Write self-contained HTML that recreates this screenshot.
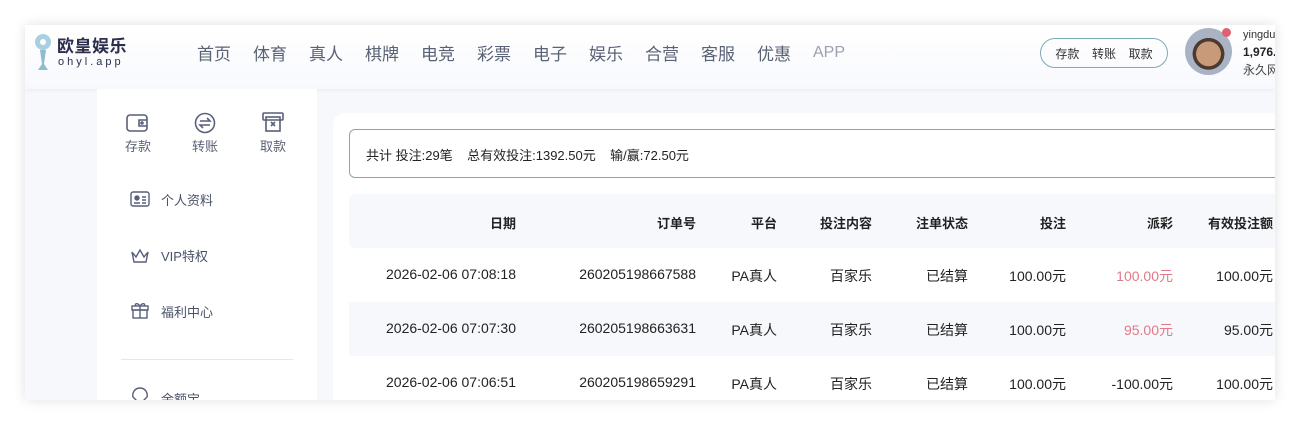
<!DOCTYPE html>
<html><head><meta charset="utf-8"><style>
*{margin:0;padding:0;box-sizing:border-box}
body{width:1300px;height:425px;background:#fff;font-family:"Liberation Sans","Noto Sans CJK SC",sans-serif;position:relative;overflow:hidden}
#page{position:absolute;left:25px;top:25px;width:1250px;height:375px;background:#f7f8fc;overflow:hidden;box-shadow:0 0 12px rgba(0,0,0,.12)}
#hdr{position:absolute;left:0;top:0;width:1250px;height:64px;background:linear-gradient(#fff,#f8f9fd);box-shadow:0 2px 4px rgba(0,0,0,.04)}
.logo-t{position:absolute;left:32px;top:7px;font-size:17px;font-weight:bold;color:#2b2f4d;letter-spacing:0.5px}
.logo-s{position:absolute;left:33px;top:31px;font-size:11px;color:#2b2f4d;letter-spacing:3px}
.nav{position:absolute;top:15px;font-size:17px;color:#5a6275;white-space:nowrap}
.btns{position:absolute;left:1015px;top:13px;width:128px;height:30px;border:1px solid #7eaab5;border-radius:15px;font-size:12px;color:#333;display:flex;justify-content:space-around;align-items:center;padding:0 8px}
.av{position:absolute;left:1160px;top:3px;width:47px;height:47px;border-radius:50%;background:radial-gradient(circle at 50% 55%,#c99a7a 0 35%,#4a3a30 36% 45%,#aab3c4 46%)}
.dot{position:absolute;left:1197px;top:3px;width:9px;height:9px;border-radius:50%;background:#e06070}
.ui{position:absolute;left:1218px;white-space:nowrap}
#side{position:absolute;left:72px;top:64px;width:220px;height:320px;background:#fff}
.qi{position:absolute;top:47px;font-size:13px;color:#5a6275;text-align:center;width:40px}
.mi{position:absolute;left:64px;font-size:13px;color:#4a5266}
#main{position:absolute;left:308px;top:88px;width:960px;height:300px;background:#fff;border-radius:12px 0 0 0}
.sum{position:absolute;left:16px;top:16px;width:950px;height:49px;border:1px solid #7eaab5;border-radius:6px;font-size:13px;color:#222;padding:15px 0 0 16px}
.th{position:absolute;left:16px;top:81px;width:950px;height:54px;background:#f7f8fc;border-radius:6px}
.row{position:absolute;left:16px;width:950px;height:54px}
.c{position:absolute;font-size:14px;color:#222;text-align:right;white-space:nowrap}
.h{font-size:13px;font-weight:bold}
</style></head><body><div id="page">
<div id="hdr">
<svg style="position:absolute;left:7px;top:7px" width="22" height="42" viewBox="0 0 22 42"><circle cx="11" cy="10" r="8" fill="#a9cfe0"/><circle cx="11" cy="10" r="3" fill="#fff"/><path d="M8 18 L14 18 L12 32 L16 38 L6 38 L10 32Z" fill="#8fbccf"/></svg>
<div class="logo-t">欧皇娱乐</div><div class="logo-s">ohyl.app</div>
<div class="nav" style="left:172px">首页</div><div class="nav" style="left:228px">体育</div><div class="nav" style="left:284px">真人</div><div class="nav" style="left:340px">棋牌</div><div class="nav" style="left:396px">电竞</div><div class="nav" style="left:452px">彩票</div><div class="nav" style="left:508px">电子</div><div class="nav" style="left:564px">娱乐</div><div class="nav" style="left:620px">合营</div><div class="nav" style="left:676px">客服</div><div class="nav" style="left:732px">优惠</div><div class="nav" style="left:788px;color:#9aa0ad;top:19px;font-size:16px">APP</div>
<div class="btns"><span>存款</span><span>转账</span><span>取款</span></div>
<div class="av"></div><div class="dot"></div>
<div class="ui" style="top:4px;font-size:11px;color:#333">yingdu</div>
<div class="ui" style="top:20px;font-size:12px;font-weight:bold;color:#222">1,976.</div>
<div class="ui" style="top:36px;font-size:12px;color:#444">永久网</div>
</div>
<div id="side">
<svg style="position:absolute;left:29px;top:25px" width="22" height="18" viewBox="0 0 22 18" fill="none" stroke="#5a5f7a" stroke-width="1.6"><rect x="1" y="1" width="20" height="16" rx="3"/><path d="M21 6h-8v6h8"/><circle cx="16" cy="9" r="1"/></svg>
<svg style="position:absolute;left:97px;top:23px" width="22" height="22" viewBox="0 0 22 22" fill="none" stroke="#5a5f7a" stroke-width="1.6"><circle cx="11" cy="11" r="9.5"/><path d="M6 9h10l-3-3M16 13H6l3 3"/></svg>
<svg style="position:absolute;left:165px;top:23px" width="22" height="20" viewBox="0 0 22 20" fill="none" stroke="#5a5f7a" stroke-width="1.6"><rect x="1" y="1" width="20" height="7" rx="1"/><rect x="4" y="5" width="14" height="14"/><path d="M9 10l4 4M13 10l-4 4"/></svg>
<div class="qi" style="left:21px">存款</div><div class="qi" style="left:88px">转账</div><div class="qi" style="left:156px">取款</div>
<svg style="position:absolute;left:33px;top:102px" width="20" height="16" viewBox="0 0 20 16" fill="none" stroke="#5a5f7a" stroke-width="1.4"><rect x="1" y="1" width="18" height="14" rx="2"/><circle cx="7" cy="7" r="2" fill="#5a5f7a"/><path d="M4 12h6M12 6h4M12 9h4M12 12h4"/></svg>
<div class="mi" style="top:101px">个人资料</div>
<svg style="position:absolute;left:32px;top:158px" width="22" height="16" viewBox="0 0 22 16" fill="none" stroke="#5a5f7a" stroke-width="1.4"><path d="M3 5l4 5 4-7 4 7 4-5-2 10H5z"/></svg>
<div class="mi" style="top:157px">VIP特权</div>
<svg style="position:absolute;left:34px;top:212px" width="18" height="18" viewBox="0 0 18 18" fill="none" stroke="#5a5f7a" stroke-width="1.4"><rect x="1" y="5" width="16" height="4"/><rect x="2" y="9" width="14" height="8"/><path d="M9 5v12M9 5C6 1 3 3 5 5M9 5c3-4 6-2 4 0"/></svg>
<div class="mi" style="top:213px">福利中心</div>
<div style="position:absolute;left:24px;top:270px;width:172px;height:1px;background:#e3e8ef"></div>
<svg style="position:absolute;left:34px;top:298px" width="18" height="18" viewBox="0 0 18 18" fill="none" stroke="#5a5f7a" stroke-width="1.4"><path d="M9 1c-6 0-8 6-7 9l7 7 7-7c1-3-1-9-7-9z"/></svg>
<div class="mi" style="top:300px">余额宝</div>
</div>
<div id="main">
<div class="sum">共计 投注:29笔&nbsp;&nbsp;&nbsp;&nbsp;总有效投注:1392.50元&nbsp;&nbsp;&nbsp;&nbsp;输/赢:72.50元</div>
<div class="th"></div>
<div class="row" style="top:189px;background:#f7f8fc"></div>
</div>
<div style="position:absolute;left:0;top:0">
<div class="c h" style="right:-491px;top:188px">日期</div>
<div class="c h" style="right:-671px;top:188px">订单号</div>
<div class="c h" style="right:-752px;top:188px">平台</div>
<div class="c h" style="right:-847px;top:188px">投注内容</div>
<div class="c h" style="right:-943px;top:188px">注单状态</div>
<div class="c h" style="right:-1041px;top:188px">投注</div>
<div class="c h" style="right:-1148px;top:188px">派彩</div>
<div class="c h" style="right:-1248px;top:188px">有效投注额</div>

<div class="c" style="right:-491px;top:241px">2026-02-06 07:08:18</div>
<div class="c" style="right:-671px;top:241px">260205198667588</div>
<div class="c" style="right:-752px;top:241px">PA真人</div>
<div class="c" style="right:-847px;top:241px">百家乐</div>
<div class="c" style="right:-943px;top:241px">已结算</div>
<div class="c" style="right:-1041px;top:241px">100.00元</div>
<div class="c" style="right:-1148px;top:241px;color:#e07a88">100.00元</div>
<div class="c" style="right:-1248px;top:241px">100.00元</div>

<div class="c" style="right:-491px;top:295px">2026-02-06 07:07:30</div>
<div class="c" style="right:-671px;top:295px">260205198663631</div>
<div class="c" style="right:-752px;top:295px">PA真人</div>
<div class="c" style="right:-847px;top:295px">百家乐</div>
<div class="c" style="right:-943px;top:295px">已结算</div>
<div class="c" style="right:-1041px;top:295px">100.00元</div>
<div class="c" style="right:-1148px;top:295px;color:#e07a88">95.00元</div>
<div class="c" style="right:-1248px;top:295px">95.00元</div>

<div class="c" style="right:-491px;top:349px">2026-02-06 07:06:51</div>
<div class="c" style="right:-671px;top:349px">260205198659291</div>
<div class="c" style="right:-752px;top:349px">PA真人</div>
<div class="c" style="right:-847px;top:349px">百家乐</div>
<div class="c" style="right:-943px;top:349px">已结算</div>
<div class="c" style="right:-1041px;top:349px">100.00元</div>
<div class="c" style="right:-1148px;top:349px">-100.00元</div>
<div class="c" style="right:-1248px;top:349px">100.00元</div>
</div>
</div></body></html>
